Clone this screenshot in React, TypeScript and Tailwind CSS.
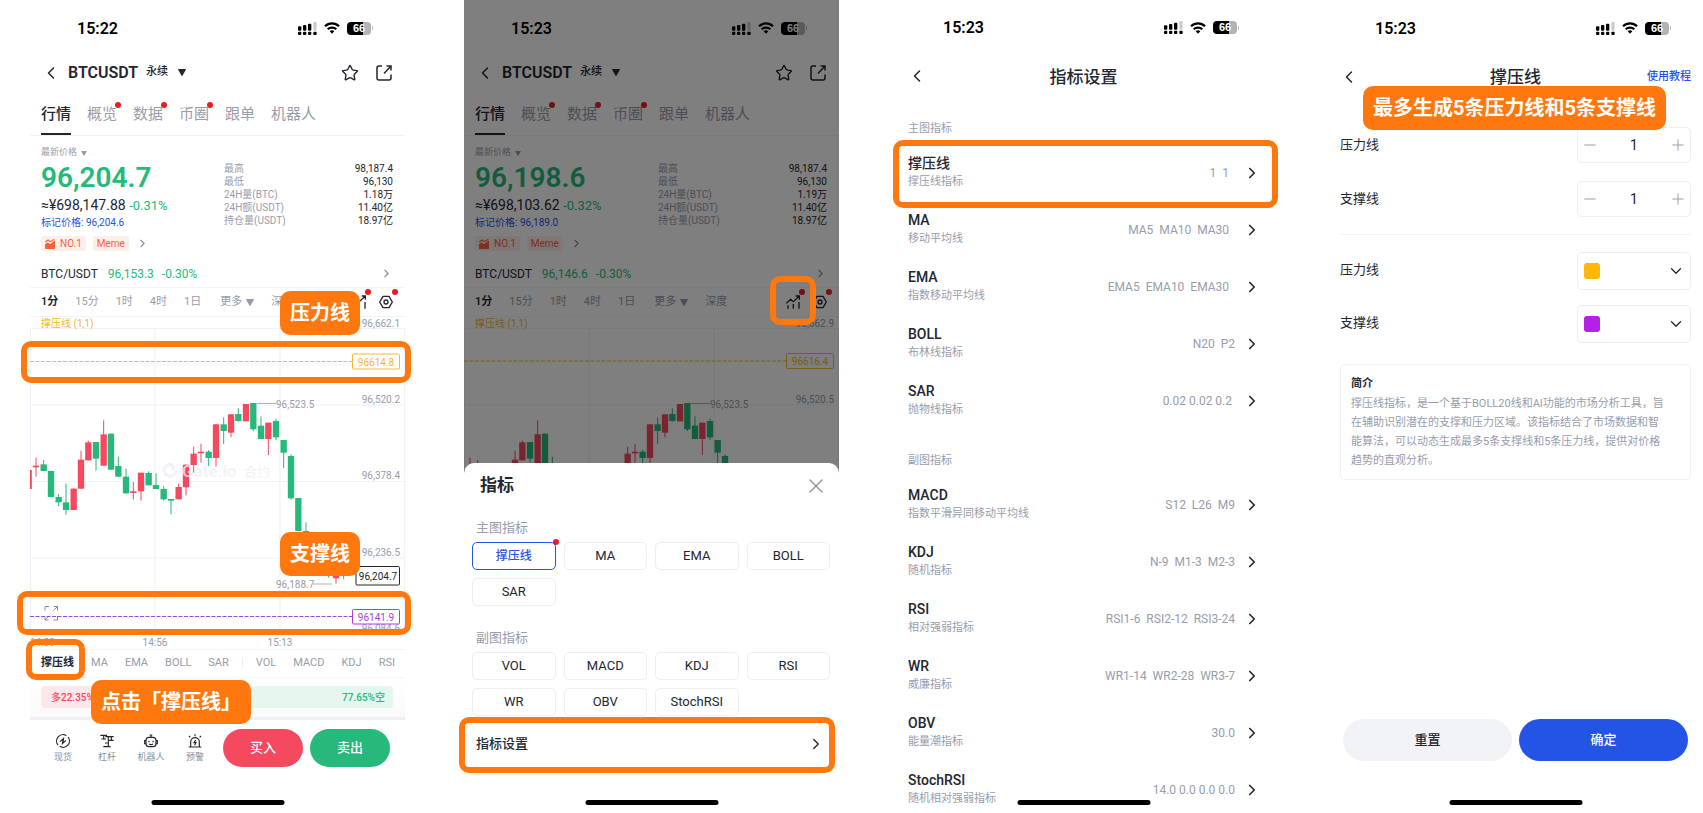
import type { ReactNode } from "react";
import { ChevronDown, ChevronLeft, ChevronRight, Minus, Plus, Star, X } from "lucide-react";

/* ---------- shared pieces ---------- */

function StatusBar({ time }: { time: string }) {
  return (
    <div className="flex h-14 items-center justify-between pr-8 pl-[47px] text-black">
      <span className="pt-px text-[16px] leading-5 font-semibold">{time}</span>
      <div className="flex items-center gap-[7px]">
        <svg viewBox="0 0 57 39" className="h-[13px] w-[19px]" aria-hidden="true">
          {[0, 15, 30, 46].map((x) => (
            <rect key={x} x={x} y="29" width="10" height="10" rx="3" />
          ))}
          <rect x="0" y="13" width="10" height="13" rx="3" />
          <rect x="15" y="9" width="10" height="17" rx="3" />
          <rect x="30" y="5" width="10" height="21" rx="3" />
          <rect x="46" y="0" width="10" height="26" rx="3" fillOpacity="0.2" />
        </svg>
        <svg viewBox="0 0 48 36" className="h-3 w-4" fill="none" stroke="currentColor" strokeWidth="6.5" aria-hidden="true">
          <path d="M3 13C15 1 33 1 45 13" />
          <path d="M11 22C18 15 30 15 37 22" />
          <path d="M24 35l-7-7c4-4 10-4 14 0z" fill="currentColor" stroke="none" />
        </svg>
        <div className="flex items-center">
          <span className="flex h-[13px] w-6 items-center justify-center rounded-[4px] bg-linear-to-r from-black from-66% to-[#b3b3b3] to-66% font-['Liberation_Sans'] text-[11px] leading-[13px] font-bold text-white">
            66
          </span>
          <span className="ml-px h-1 w-px rounded-r bg-[#b3b3b3]" />
        </div>
      </div>
    </div>
  );
}

function HomeBar() {
  return <div className="absolute bottom-2 left-1/2 h-[5px] w-[133px] -translate-x-1/2 rounded-full bg-black" />;
}

function Frame({ className }: { className: string }) {
  return <div className={`pointer-events-none absolute rounded-[10px] border-[6px] border-[#ff780f] ${className}`} />;
}

function Callout({ className, children }: { className: string; children: ReactNode }) {
  return (
    <div className={`absolute rounded-[10px] bg-[#ff780f] px-[10px] text-[20px] leading-[44px] font-bold whitespace-nowrap text-white ${className}`}>
      {children}
    </div>
  );
}

function Dot({ className }: { className: string }) {
  return <span className={`absolute size-[6px] rounded-full bg-[#ec1c24] ${className}`} />;
}

function Caret({ className }: { className: string }) {
  return (
    <svg viewBox="0 0 8 7" className={className} fill="currentColor" aria-hidden="true">
      <path d="M.6 0h6.800q.8 0 .4.8L4.600 6.400q-.6.8-1.200 0L.2.8Q-.2 0 .6 0z" />
    </svg>
  );
}

/* ---------- market screen ---------- */

type Candle = [x: number, high: number, low: number, top: number, bottom: number, up: 0 | 1];

const candles: Candle[] = [
  [86, 600, 657, 600, 657, 1], [108, 563, 620, 587, 592, 1], [131, 570, 603, 583, 603, 0], [153, 602, 682, 603, 681, 0],
  [176, 672, 709, 681, 697, 0], [198, 641, 734, 697, 720, 0], [221, 655, 720, 656, 720, 1], [243, 542, 656, 569, 656, 1],
  [265, 512, 572, 517, 571, 1], [288, 516, 602, 516, 566, 0], [311, 451, 587, 493, 587, 1], [333, 490, 600, 491, 599, 0],
  [355, 560, 621, 588, 620, 0], [378, 596, 671, 620, 670, 0], [400, 636, 688, 664, 669, 1], [423, 608, 692, 608, 664, 1],
  [446, 604, 646, 609, 646, 0], [468, 610, 657, 645, 657, 0], [491, 648, 692, 657, 688, 0], [513, 687, 733, 687, 692, 0],
  [536, 641, 688, 651, 688, 1], [558, 584, 676, 584, 652, 1], [581, 530, 608, 551, 585, 1], [603, 521, 578, 545, 550, 1],
  [626, 540, 588, 545, 564, 0], [648, 462, 590, 463, 564, 1], [671, 442, 522, 463, 483, 0], [693, 432, 502, 433, 488, 1],
  [715, 415, 455, 432, 453, 0], [738, 402, 454, 402, 454, 1], [760, 399, 483, 399, 478, 0], [783, 439, 507, 467, 507, 0],
  [805, 458, 555, 458, 507, 1], [828, 446, 510, 453, 502, 0], [851, 510, 594, 510, 548, 0], [873, 553, 689, 558, 685, 0],
  [895, 684, 783, 684, 783, 0], [918, 757, 870, 783, 850, 0], [941, 840, 890, 850, 880, 0], [963, 850, 900, 860, 890, 1],
  [986, 880, 923, 885, 915, 0], [1008, 890, 941, 915, 925, 1], [1031, 880, 928, 890, 915, 0],
];

type Market = {
  time: string; price: string; cny: string; change: string; mark: string; volume: string;
  spot: string; axisTop: string; axisHigh: string; resistance: string; lineY: number;
};

function Chart({ m, full }: { m: Market; full: boolean }) {
  const axis: [string, number][] = full
    ? [[m.axisTop, 6], [m.axisHigh, 82], ["96,378.4", 158], ["96,236.5", 235], ["96,084.6", 311]]
    : [[m.axisTop, 6], [m.axisHigh, 82]];
  return (
    <svg viewBox="0 0 375 332" className="block w-full text-[10px]" fill="#989cab" dominantBaseline="central" role="img" aria-label="K线图">
      <g stroke="#f1f2f9" strokeWidth="1.2" fill="none">
        <path d="M0 11.500H375M0 88H375M0 164.500H375M0 241H375" />
        <path d="M.5 11.500V318M125 11.500V318M250 11.500V318M374.500 11.500V318" />
      </g>
      <g transform="translate(-30 -47) scale(.33333)">
        {candles.map(([x, high, low, top, bottom, up]) => (
          <g key={x} fill={up ? "#f4495f" : "#27b97b"}>
            <rect x={x - 1.5} y={high} width="3" height={low - high} />
            <rect x={x - 9.5} y={top} width="19" height={bottom - top} />
          </g>
        ))}
      </g>
      {full && (
        <g fill="#edeff3" fillOpacity="0.75">
          <path d="M143 146.500a7.500 7.500 0 1 0 4.500 7h-3.500a4 4 0 1 1-3-4v3.500h3.500v-4z" />
          <text x="152" y="154" fontSize="17" fontWeight="600">Gate.io</text>
          <text x="214" y="154" fontSize="13" fontWeight="500">合约</text>
        </g>
      )}
      {axis.map(([t, y]) => (
        <text key={t} x="370" y={y} textAnchor="end">{t}</text>
      ))}
      <path d="M227 86.500H246" stroke="#989cab" strokeWidth="0.8" />
      <text x="246" y="87">96,523.5</text>
      <text x="11" y="6.500" fill="#f3b62c">撑压线 (1,1)</text>
      <g stroke="#f0bd31" fill="none">
        <path d={`M0 ${m.lineY}H322`} strokeDasharray="4 1.500" strokeWidth="1" />
        <rect x="322.500" y={m.lineY - 7.5} width="47" height="15" rx="1" />
      </g>
      <text x="346" y={m.lineY + 0.5} fill="#f0b92b" textAnchor="middle">{m.resistance}</text>
      {full && (
        <>
          <path d="M283 267H302" stroke="#989cab" strokeWidth="0.8" />
          <text x="246" y="267.500">96,188.7</text>
          <rect x="326" y="249.500" width="43.500" height="18.500" rx="1" fill="#fff" stroke="#23262f" />
          <text x="348" y="259" fill="#23262f" textAnchor="middle">96,204.7</text>
          <path d="M19 289.500h-4v4M15 299.500v3.500h3.500M23.500 289.500h4v4M27.500 289.500l-4 4M27.500 299v4h-4M19 299l-4 4" stroke="#8b8f9b" fill="none" />
          <path d="M0 299.500H322" stroke="#a646d4" strokeDasharray="4 1.500" />
          <rect x="322.500" y="292.500" width="47" height="14.500" rx="1" fill="#fff" stroke="#a93fd8" />
          <text x="346" y="300" fill="#a93fd8" textAnchor="middle">96141.9</text>
          <text x="0" y="325">14:39</text>
          <text x="125" y="325" textAnchor="middle">14:56</text>
          <text x="250" y="325" textAnchor="middle">15:13</text>
        </>
      )}
    </svg>
  );
}

const tabs: [string, boolean][] = [["行情", false], ["概览", true], ["数据", true], ["币圈", true], ["跟单", false], ["机器人", false]];

function MarketTop({ m, full }: { m: Market; full: boolean }) {
  const stats: [string, string][] = [
    ["最高", "98,187.4"], ["最低", "96,130"], ["24H量(BTC)", m.volume], ["24H额(USDT)", "11.40亿"], ["持仓量(USDT)", "18.97亿"],
  ];
  return (
    <>
      <StatusBar time={m.time} />
      <header className="flex h-[33px] items-center pr-[13px] pl-[11px]">
        <button aria-label="返回"><ChevronLeft size={20} strokeWidth={1.8} /></button>
        <h1 className="ml-[7px] text-[16px] font-semibold">BTCUSDT</h1>
        <button className="ml-2 flex items-center gap-[10px] text-[11px] font-medium">
          永续 <Caret className="h-[7px] w-2" />
        </button>
        <button aria-label="收藏" className="ml-auto"><Star size={18} strokeWidth={1.9} /></button>
        <button aria-label="分享" className="ml-[17px]">
          <svg viewBox="0 0 16 16" className="size-4" fill="none" stroke="currentColor" strokeWidth="1.500">
            <path d="M6 1H3a2 2 0 0 0-2 2v10a2 2 0 0 0 2 2h10a2 2 0 0 0 2-2V9.500M10.500 1H15v4.500M15 1L8 8.500" />
          </svg>
        </button>
      </header>
      <nav className="flex h-[47px] gap-4 border-b border-[#f1f2f5] pl-[11px] text-[15px] text-[#989cab]">
        {tabs.map(([t, dot], i) => (
          <button key={t} className={i === 0 ? "relative h-full border-b-2 border-[#23262f] pt-[7px] font-medium text-[#23262f]" : "relative h-full pt-[5px]"}>
            {t}
            {dot && <Dot className="top-[13px] -right-1" />}
          </button>
        ))}
      </nav>
      <section className="flex justify-between pr-3 pl-[11px]">
        <div className="pt-[10px]">
          <button className="flex h-[14px] items-center gap-1 text-[9px] text-[#989cab]">
            最新价格 <Caret className="h-[5px] w-[6px]" />
          </button>
          <p className="text-[28px] leading-[36px] font-semibold text-[#27b97b]">{m.price}</p>
          <p className="text-[14px] leading-[18px]">
            ≈¥{m.cny} <span className="text-[13px] text-[#27b97b]">{m.change}</span>
          </p>
          <p className="mt-px text-[10px] leading-[14px] text-[#2354e6]">标记价格: {m.mark}</p>
          <div className="mt-[6px] flex h-[15px] items-center gap-[7px] text-[10px] text-[#f9603c]">
            <span className="flex h-full items-center gap-[5px] rounded-[2px] bg-[#feefeb] px-1">
              <svg viewBox="0 0 30 30" className="size-[10px]" fill="currentColor" aria-hidden="true">
                <path d="M0 16l8-6 7 5 15-11v24q0 2-2 2H2q-2 0-2-2z" />
                <path d="M0 11l8-6 7 5L28 1" fill="none" stroke="#feefeb" strokeWidth="7" />
                <path d="M1 9l8-6 7 5 12-7" fill="none" stroke="currentColor" strokeWidth="3.500" />
              </svg>
              NO.1
            </span>
            <span className="flex h-full items-center rounded-[2px] bg-[#feefeb] px-1">Meme</span>
            <ChevronRight size={13} className="text-[#8b8f9b]" />
          </div>
        </div>
        <dl className="mt-[26px] w-[169px] text-[10px] leading-[13px]">
          {stats.map(([k, v]) => (
            <div key={k} className="flex justify-between">
              <dt className="text-[#989cab]">{k}</dt>
              <dd>{v}</dd>
            </div>
          ))}
        </dl>
      </section>
      <a href="#spot" className="mt-[9px] flex h-7 items-center gap-[10px] border-b border-[#f3f4f7] pr-3 pl-[11px] text-[12px]">
        <span>BTC/USDT</span>
        <span className="flex gap-2 text-[#27b97b]"><span>{m.spot}</span><span>-0.30%</span></span>
        <ChevronRight size={13} className="ml-auto text-[#8b8f9b]" />
      </a>
      <div className="flex h-[29px] items-center gap-[17px] border-b border-[#f3f4f7] pl-[11px] text-[11px] text-[#989cab]">
        <button className="font-semibold text-[#23262f]">1分</button>
        <button>15分</button>
        <button>1时</button>
        <button>4时</button>
        <button>1日</button>
        <button className="ml-[2px] flex items-center gap-1">更多 <Caret className="h-[7px] w-2" /></button>
        <button>深度</button>
        <button aria-label="指标" className="relative ml-auto text-[#23262f]">
          <svg viewBox="0 0 42 42" className="size-[14px]" fill="none" stroke="currentColor" strokeWidth="4">
            <path d="M1 25l13-12 8 7L39 4M29 3h11v11M6 31v10M22 27v14M39 21v20" />
          </svg>
          <Dot className="-top-[6px] -right-[5px]" />
        </button>
        <button aria-label="设置" className="relative mr-3 -ml-1 text-[#23262f]">
          <svg viewBox="0 0 42 42" className="size-[14px]" fill="none" stroke="currentColor" strokeWidth="4">
            <path d="M12 4h18l10 17-10 17H12L2 21z" strokeLinejoin="round" />
            <circle cx="21" cy="21" r="6" />
          </svg>
          <Dot className="-top-[6px] -right-[5px]" />
        </button>
      </div>
      <Chart m={m} full={full} />
    </>
  );
}

const shortcuts: [string, ReactNode][] = [
  ["现货", <g key="i"><path d="M31 5A19 19 0 0 0 6 33M11 37A19 19 0 0 0 36 9" /><path d="M12 23l10-9-3 15M30 19l-10 9 3-15" /></g>],
  ["杠杆", <g key="i"><path d="M1 4h20M11 4v10M4 15h14M16 8h25M34 8v9M27 19h14M25 8v29M10 38h22M15 27h8" /></g>],
  ["机器人", <g key="i"><rect x="6" y="10" width="30" height="28" rx="9" /><path d="M21 10V3M17 3h8M6 20H2v9h4M36 20h4v9h-4M15 20v5M27 20v5M15 30q6 4 12 0" /></g>],
  ["预警", <g key="i"><path d="M8 38V24a13 13 0 0 1 26 0v14M2 39h38M21 7V1M7 10L3 6M35 10l4-4" /><path d="M23 18l-5 8h6l-4 8" /></g>],
];

function MarketPhone() {
  const m: Market = {
    time: "15:22", price: "96,204.7", cny: "698,147.88", change: "-0.31%", mark: "96,204.6", volume: "1.18万",
    spot: "96,153.3", axisTop: "96,662.1", axisHigh: "96,520.2", resistance: "96614.8", lineY: 44.5,
  };
  return (
    <section className="relative flex flex-1 flex-col">
      <MarketTop m={m} full />
      <nav className="flex h-[29px] items-center gap-[17px] overflow-hidden border-y border-[#f3f4f7] pl-[11px] text-[11px] whitespace-nowrap text-[#989cab]">
        <button className="font-semibold text-[#23262f]">撑压线</button>
        {["MA", "EMA", "BOLL", "SAR"].map((t) => <button key={t}>{t}</button>)}
        <span className="-mx-1 h-[11px] w-px bg-[#eceef2]" />
        {["VOL", "MACD", "KDJ", "RSI"].map((t) => <button key={t}>{t}</button>)}
      </nav>
      <div className="border-b-[3px] border-[#eff0f5] bg-linear-to-b from-white to-[#fafafd] pt-2 pr-3 pb-[9px] pl-[11px]">
        <div className="flex h-[22px] items-center justify-between overflow-hidden rounded bg-linear-to-r from-[#fae8eb] from-23% to-[#e5f6ef] to-23% pr-2 pl-[10px] text-[10px] font-medium">
          <span className="text-[#f4495f]">多22.35%</span>
          <span className="text-[#27b97b]">77.65%空</span>
        </div>
      </div>
      <footer className="flex h-[93px] pt-[9px] pr-[15px] pl-[11px]">
        {shortcuts.map(([label, icon]) => (
          <button key={label} className="flex h-[38px] w-11 flex-col items-center gap-[3px] pt-[5px] text-[9px] leading-3 text-[#8b8f9b]">
            <svg viewBox="0 0 42 42" className="size-[14px] text-[#23262f]" fill="none" stroke="currentColor" strokeWidth="3.500">{icon}</svg>
            {label}
          </button>
        ))}
        <div className="ml-[6px] flex flex-1 gap-[7px] text-[13px] font-medium text-white">
          <button className="h-[38px] flex-1 rounded-full bg-[#f4495f]">买入</button>
          <button className="h-[38px] flex-1 rounded-full bg-[#27b97b]">卖出</button>
        </div>
      </footer>
      <Frame className="top-[341px] -right-[6px] -left-[9px] h-[42px]" />
      <Frame className="top-[591px] -right-[6px] -left-[13px] h-[44px]" />
      <Frame className="top-[639px] -left-1 h-[41px] w-[59px]" />
      <Callout className="top-[291px] left-[250px]">压力线</Callout>
      <Callout className="top-[532px] left-[250px]">支撑线</Callout>
      <Callout className="top-[680px] left-[61px]">点击「撑压线」</Callout>
      <HomeBar />
    </section>
  );
}

/* ---------- indicator sheet ---------- */

function Chips({ items, active }: { items: string[]; active?: string }) {
  return (
    <div className="grid grid-cols-4 gap-2 pr-[9px] pl-2 text-[13px] text-[#23262f]">
      {items.map((t) => (
        <button key={t} className={t === active ? "relative h-7 rounded-[5px] border border-[#2354e6] text-[12px] font-medium text-[#2354e6]" : "h-7 rounded-[5px] border border-[#eceef2]"}>
          {t}
          {t === active && <Dot className="-top-1 -right-1" />}
        </button>
      ))}
    </div>
  );
}

function SheetPhone() {
  const m: Market = {
    time: "15:23", price: "96,198.6", cny: "698,103.62", change: "-0.32%", mark: "96,189.0", volume: "1.19万",
    spot: "96,146.6", axisTop: "96,662.9", axisHigh: "96,520.5", resistance: "96616.4", lineY: 44,
  };
  return (
    <section className="relative ml-0.5 flex flex-1 flex-col">
      <div className="relative h-[473px] overflow-hidden">
        <MarketTop m={m} full={false} />
        <div className="absolute inset-0 bg-black/50" />
      </div>
      <div className="relative -mt-[10px] flex-1 rounded-t-[10px] bg-white">
        <div className="flex h-[45px] items-center justify-between pr-[11px] pl-4">
          <h2 className="text-[17px] font-bold">指标</h2>
          <button aria-label="关闭"><X size={24} strokeWidth={1.300} className="text-[#8b8f9b]" /></button>
        </div>
        <h3 className="mt-[10px] mb-1 pl-3 text-[13px] leading-5 text-[#989cab]">主图指标</h3>
        <Chips items={["撑压线", "MA", "EMA", "BOLL", "SAR"]} active="撑压线" />
        <h3 className="mt-[22px] mb-1 pl-3 text-[13px] leading-5 text-[#989cab]">副图指标</h3>
        <Chips items={["VOL", "MACD", "KDJ", "RSI", "WR", "OBV", "StochRSI"]} />
        <button className="mt-2 flex h-10 w-full items-center justify-between pr-[14px] pl-3 text-[13px] font-medium">
          指标设置 <ChevronRight size={18} strokeWidth={1.800} />
        </button>
      </div>
      <Frame className="top-[276px] right-[23px] h-[49px] w-[46px]" />
      <Frame className="top-[717px] right-1 -left-[5px] h-14" />
      <HomeBar />
    </section>
  );
}

/* ---------- indicator list ---------- */

type Row = [name: string, desc: string, value: string];

const mainRows: Row[] = [
  ["撑压线", "撑压线指标", "1  1  "],
  ["MA", "移动平均线", "MA5  MA10  MA30  "],
  ["EMA", "指数移动平均线", "EMA5  EMA10  EMA30  "],
  ["BOLL", "布林线指标", "N20  P2"],
  ["SAR", "抛物线指标", "0.02 0.02 0.2 "],
];
const subRows: Row[] = [
  ["MACD", "指数平滑异同移动平均线", "S12  L26  M9"],
  ["KDJ", "随机指标", "N-9  M1-3  M2-3"],
  ["RSI", "相对强弱指标", "RSI1-6  RSI2-12  RSI3-24"],
  ["WR", "威廉指标", "WR1-14  WR2-28  WR3-7"],
  ["OBV", "能量潮指标", "30.0"],
  ["StochRSI", "随机相对强弱指标", "14.0 0.0 0.0 0.0"],
];

function IndicatorGroup({ title, rows }: { title: string; rows: Row[] }) {
  return (
    <>
      <h2 className="text-[11px] leading-4 text-[#989cab]">{title}</h2>
      <ul className="mt-[7px]">
        {rows.map(([name, desc, value]) => (
          <li key={name}>
            <button className="flex h-[57px] w-full items-center text-left">
              <span className="flex flex-col">
                <span className="text-[14px] leading-[18px] font-medium">{name}</span>
                <span className="mt-px text-[11px] leading-[18px] text-[#989cab]">{desc}</span>
              </span>
              <span className="ml-auto text-[12px] whitespace-pre text-[#989cab]">{value}</span>
              <ChevronRight size={18} strokeWidth={2.200} className="ml-2" />
            </button>
          </li>
        ))}
      </ul>
    </>
  );
}

function TitleBar({ title, children }: { title: string; children?: ReactNode }) {
  return (
    <header className="relative flex h-[42px] items-center justify-between pr-3 pl-[11px]">
      <button aria-label="返回"><ChevronLeft size={20} strokeWidth={1.800} /></button>
      <h1 className="absolute inset-x-16 pt-[2px] text-center text-[17px] font-medium">{title}</h1>
      {children}
    </header>
  );
}

function ListPhone() {
  return (
    <section className="relative flex max-h-[813px] flex-1 flex-col">
      <StatusBar time="15:23" />
      <TitleBar title="指标设置" />
      <div className="flex flex-col overflow-hidden pt-6 pr-[10px] pl-3">
        <IndicatorGroup title="主图指标" rows={mainRows} />
        <div className="mt-6"><IndicatorGroup title="副图指标" rows={subRows} /></div>
      </div>
      <Frame className="top-[140px] -right-[7px] -left-[3px] h-[68px]" />
      <HomeBar />
    </section>
  );
}

/* ---------- line settings ---------- */

function Stepper({ id, label }: { id: string; label: string }) {
  return (
    <div className="flex h-9 items-center justify-between">
      <label htmlFor={id}>{label}</label>
      <div className="flex h-9 w-[114px] items-center rounded-[5px] border border-[#eceef2] px-[3px] text-[#989cab]">
        <button aria-label="减少"><Minus size={18} strokeWidth={1.300} /></button>
        <input id={id} defaultValue="1" inputMode="numeric" className="w-full min-w-0 text-center text-[14px] text-[#23262f] outline-none" />
        <button aria-label="增加"><Plus size={18} strokeWidth={1.300} /></button>
      </div>
    </div>
  );
}

function ColorSelect({ id, label, value, swatch }: { id: string; label: string; value: string; swatch: string }) {
  return (
    <div className="flex h-[38px] items-center justify-between">
      <label htmlFor={id} className="pb-[2px]">{label}</label>
      <div className="relative h-[38px] w-[114px]">
        <select id={id} defaultValue={value} className="h-full w-full appearance-none rounded-[5px] border border-[#eceef2] bg-white">
          <option value={value} />
        </select>
        <span className={`pointer-events-none absolute top-[11px] left-[7px] size-4 rounded-[3px] ${swatch}`} />
        <ChevronDown size={18} strokeWidth={1.700} className="pointer-events-none absolute top-[10px] right-[6px]" />
      </div>
    </div>
  );
}

function SettingsPhone() {
  return (
    <section className="relative flex flex-1 flex-col">
      <StatusBar time="15:23" />
      <TitleBar title="撑压线">
        <a href="#guide" className="text-[11px] font-medium text-[#2354e6]">使用教程</a>
      </TitleBar>
      <form className="flex flex-1 flex-col px-3 pt-[29px] text-[13px]">
        <div className="flex flex-col gap-[18px] border-b border-[#f1f2f5] pb-[17px]">
          <Stepper id="resistance-count" label="压力线" />
          <Stepper id="support-count" label="支撑线" />
        </div>
        <div className="mt-[17px] flex flex-col gap-[15px]">
          <ColorSelect id="resistance-color" label="压力线" value="#ffb80a" swatch="bg-[#ffb80a]" />
          <ColorSelect id="support-color" label="支撑线" value="#b321e8" swatch="bg-[#b321e8]" />
        </div>
        <div className="mt-[21px] rounded-[5px] border border-[#eff0f4] px-[10px] py-[9px] text-[11px] leading-[19px]">
          <h2 className="font-bold">简介</h2>
          <p className="mt-px whitespace-nowrap text-[#989cab]">
            撑压线指标，是一个基于BOLL20线和AI功能的市场分析工具，旨<br />
            在辅助识别潜在的支撑和压力区域。该指标结合了市场数据和智<br />
            能算法，可以动态生成最多5条支撑线和5条压力线，提供对价格<br />
            趋势的直观分析。
          </p>
        </div>
        <div className="mt-auto mb-[52px] flex gap-[7px] px-[3px] font-medium">
          <button type="reset" className="h-[42px] flex-1 rounded-full bg-[#f1f3f6]">重置</button>
          <button type="button" className="h-[42px] flex-1 rounded-full bg-[#2354e6] text-white">确定</button>
        </div>
      </form>
      <Callout className="top-[86px] left-[35px]">最多生成5条压力线和5条支撑线</Callout>
      <HomeBar />
    </section>
  );
}

export default function App() {
  return (
    <main className="flex min-h-screen gap-[57px] overflow-hidden bg-white pl-[30px] font-['Roboto','Noto_Sans_CJK_SC',sans-serif] text-[#23262f]">
      <MarketPhone />
      <SheetPhone />
      <ListPhone />
      <SettingsPhone />
    </main>
  );
}
